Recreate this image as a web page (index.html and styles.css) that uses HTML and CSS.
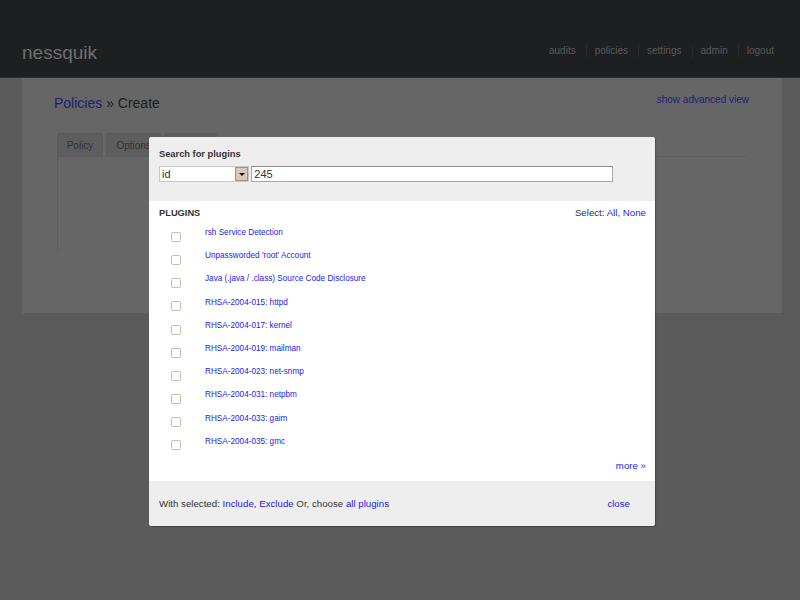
FILE: index.html
```html
<!DOCTYPE html>
<html lang="en">
<head>
<meta charset="utf-8">
<title>nessquik - Policies » Create</title>
<link rel="stylesheet" href="styles.css">
</head>
<body>
<header class="topbar">
  <div class="logo">nessquik</div>
  <nav class="nav">
    <a class="nav-item" href="#">audits</a>
    <a class="nav-item" href="#">policies</a>
    <a class="nav-item" href="#">settings</a>
    <a class="nav-item" href="#">admin</a>
    <a class="nav-item" href="#">logout</a>
  </nav>
</header>

<main class="panel">
  <div class="panel-head">
    <h1 class="title"><a class="title-link" href="#">Policies</a> » Create</h1>
    <a class="adv" href="#">show advanced view</a>
  </div>
  <div class="tabs">
    <span class="tab">Policy</span>
    <span class="tab">Options</span>
    <span class="tab tab-hidden" aria-label="Plugins"></span>
  </div>
  <div class="tabpane"></div>
</main>

<div class="modal">
  <section class="search">
    <div class="search-label">Search for plugins</div>
    <div class="search-row">
      <div class="select">
        <span class="select-value">id</span>
        <span class="select-btn"><span class="arrow"></span></span>
      </div>
      <input class="search-input" type="text" value="245">
    </div>
  </section>

  <section class="list">
    <div class="list-head">
      <span class="list-title">PLUGINS</span>
      <span class="list-select">Select: <a href="#">All</a>, <a href="#">None</a></span>
    </div>
    <ul class="rows">
      <li class="row"><input class="cb" type="checkbox"><a href="#">rsh Service Detection</a></li>
      <li class="row"><input class="cb" type="checkbox"><a href="#">Unpassworded 'root' Account</a></li>
      <li class="row"><input class="cb" type="checkbox"><a href="#">Java (.java / .class) Source Code Disclosure</a></li>
      <li class="row"><input class="cb" type="checkbox"><a href="#">RHSA-2004-015: httpd</a></li>
      <li class="row"><input class="cb" type="checkbox"><a href="#">RHSA-2004-017: kernel</a></li>
      <li class="row"><input class="cb" type="checkbox"><a href="#">RHSA-2004-019: mailman</a></li>
      <li class="row"><input class="cb" type="checkbox"><a href="#">RHSA-2004-023: net-snmp</a></li>
      <li class="row"><input class="cb" type="checkbox"><a href="#">RHSA-2004-031: netpbm</a></li>
      <li class="row"><input class="cb" type="checkbox"><a href="#">RHSA-2004-033: gaim</a></li>
      <li class="row"><input class="cb" type="checkbox"><a href="#">RHSA-2004-035: gmc</a></li>
    </ul>
    <div class="more"><a href="#">more »</a></div>
  </section>

  <footer class="footer">
    <span>With selected: <a href="#">Include</a>, <a href="#">Exclude</a> Or, choose <a href="#">all plugins</a></span>
    <a href="#">close</a>
  </footer>
</div>
</body>
</html>
```

FILE: styles.css
```css
html, body {
  margin: 0;
  padding: 0;
}

body {
  background: #5b5b5b;
  font-family: "Liberation Sans", Arial, sans-serif;
  height: 600px;
  overflow: hidden;
  position: relative;
}

a {
  text-decoration: none;
}

/* ---------- top bar ---------- */
.topbar {
  box-sizing: border-box;
  height: 78px;
  padding: 42px 16px 0 22px;
  background: #1e1f21;
  border-bottom: 1px solid #2d2e30;
  display: flex;
  justify-content: space-between;
  align-items: flex-start;
}

.logo {
  font-size: 19px;
  line-height: 22px;
  color: #6f6f6f;
}

.nav {
  display: flex;
  margin-top: 2px;
}

.nav-item {
  font-size: 10px;
  line-height: 14px;
  color: #5a5a5a;
  padding: 0 10px 0 8px;
}

.nav-item + .nav-item {
  border-left: 1px solid #28292b;
}

/* ---------- page panel ---------- */
.panel {
  display: block;
  margin-left: 22px;
  width: 760px;
  height: 235px;
  box-sizing: border-box;
  padding: 17px 33px 0 32px;
  background: #666666;
}

.panel-head {
  display: flex;
  justify-content: space-between;
  align-items: flex-start;
}

.title {
  margin: 0;
  font-size: 14px;
  line-height: 17px;
  font-weight: normal;
  color: #1c1c1c;
}

.title-link {
  color: #1e1e78;
}

.adv {
  font-size: 10px;
  line-height: 12px;
  color: #1e1e78;
  margin-top: -1.5px;
}

.tabs {
  display: flex;
  gap: 3px;
  margin: 21px 0 0 2.7px;
  height: 23px;
}

.tab {
  box-sizing: border-box;
  height: 23px;
  padding: 0 9px;
  border: 1px solid #5a5a5a;
  border-bottom: none;
  border-radius: 3px 3px 0 0;
  background: #5e5e5e;
  color: #333333;
  font-size: 10px;
  line-height: 23px;
}

.tab-hidden {
  width: 53px;
}

.tabpane {
  margin-left: 2.7px;
  width: 688px;
  height: 95px;
  border-top: 1px solid #5d5d5d;
  border-left: 1px solid #5d5d5d;
}

/* ---------- modal ---------- */
.modal {
  position: absolute;
  left: 149px;
  top: 137px;
  width: 506px;
  height: 389px;
  background: #ffffff;
  border-radius: 3px;
  overflow: hidden;
  box-shadow: 1px 1px 1px rgba(0, 0, 0, 0.25);
  display: flex;
  flex-direction: column;
  color: #333333;
}

.modal a {
  color: #2222ee;
}

.search {
  box-sizing: border-box;
  height: 64px;
  padding: 11px 10px 0 10px;
  background: #eeeeee;
}

.search-label {
  font-size: 9.3px;
  font-weight: bold;
  line-height: 12px;
  color: #333333;
}

.search-row {
  display: flex;
  gap: 2.3px;
  margin-top: 6px;
}

.select {
  box-sizing: border-box;
  width: 90px;
  height: 16px;
  background: #ffffff;
  border: 1px solid #c8c8c8;
  display: flex;
  justify-content: space-between;
  align-items: stretch;
}

.select-value {
  font-size: 11px;
  line-height: 14px;
  padding-left: 2px;
  color: #333333;
}

.select-btn {
  box-sizing: border-box;
  width: 13px;
  background: #d3cab7;
  border: 1px solid #9d9483;
  display: flex;
  align-items: center;
  justify-content: center;
}

.arrow {
  width: 0;
  height: 0;
  border-left: 3px solid transparent;
  border-right: 3px solid transparent;
  border-top: 3px solid #111111;
}

.search-input {
  box-sizing: border-box;
  width: 361.5px;
  height: 16px;
  margin: 0;
  padding: 0 2px;
  border: 1px solid #a8a8a8;
  border-top-color: #8c8c8c;
  background: #ffffff;
  font-family: "Liberation Sans", Arial, sans-serif;
  font-size: 11px;
  color: #333333;
  outline: none;
}

.list {
  flex: 1;
  padding: 6px 9px 0 10px;
}

.list-head {
  display: flex;
  justify-content: space-between;
  align-items: baseline;
  line-height: 12px;
}

.list-title {
  font-size: 9.3px;
  font-weight: bold;
  color: #333333;
}

.list-select {
  font-size: 9.7px;
  color: #333333;
}

.rows {
  list-style: none;
  margin: 8px 0 0 0;
  padding: 0 0 0 11.5px;
}

.row {
  height: 23.2px;
  display: flex;
  align-items: flex-start;
}

.cb {
  appearance: none;
  -webkit-appearance: none;
  box-sizing: border-box;
  width: 10px;
  height: 10px;
  margin: 4.8px 0 0 0;
  border: 1px solid #c9beab;
  border-radius: 2px;
  background: #ffffff;
  flex: none;
}

.row a {
  margin-left: 24.5px;
  font-size: 8.2px;
  line-height: 12px;
}

.more {
  margin-top: 1.3px;
  text-align: right;
  font-size: 9.7px;
  line-height: 12px;
}

.footer {
  box-sizing: border-box;
  height: 45px;
  padding: 0 25px 0 10px;
  background: #eeeeee;
  display: flex;
  justify-content: space-between;
  align-items: center;
  font-size: 9.7px;
  color: #333333;
}
```
